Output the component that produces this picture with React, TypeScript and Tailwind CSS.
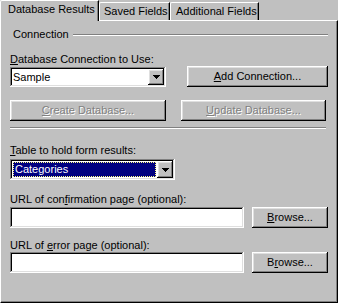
import type { ReactNode } from 'react'

const raised =
  'bg-[#c0c0c0] shadow-[inset_-1px_-1px_#000,inset_1px_1px_#fff,inset_-2px_-2px_#808080,inset_2px_2px_#dfdfdf]'
const sunken =
  'shadow-[inset_-1px_-1px_#fff,inset_1px_1px_#808080,inset_-2px_-2px_#dfdfdf,inset_2px_2px_#000]'

const Arrow = () => (
  <svg width="7" height="4" viewBox="0 0 7 4" shapeRendering="crispEdges">
    <rect x="0" y="0" width="7" height="1" fill="#000" />
    <rect x="1" y="1" width="5" height="1" fill="#000" />
    <rect x="2" y="2" width="3" height="1" fill="#000" />
    <rect x="3" y="3" width="1" height="1" fill="#000" />
  </svg>
)

type ComboProps = {
  value: string
  className: string
  selected?: boolean
}

const Combo = ({ value, className, selected }: ComboProps) => (
  <div className={`flex bg-white p-[2px] ${sunken} ${className}`}>
    {selected ? (
      <div className="m-[1px] flex flex-1 items-center border border-dotted border-[#ffff7f] bg-[#000080] pl-[1px] text-white">
        {value}
      </div>
    ) : (
      <div className="flex flex-1 items-center pl-[1px]">{value}</div>
    )}
    <div className={`flex w-[16px] items-center justify-center ${raised}`}>
      <Arrow />
    </div>
  </div>
)

type BtnProps = {
  children: ReactNode
  className: string
  disabled?: boolean
}

const Btn = ({ children, className, disabled }: BtnProps) => (
  <button
    type="button"
    className={`flex h-[21px] items-center justify-center ${raised} ${
      disabled ? 'text-[#808080] [text-shadow:1px_1px_0_#fff]' : 'text-black'
    } ${className}`}
  >
    {children}
  </button>
)

const Field = () => (
  <input
    type="text"
    className={`h-[21px] w-[234px] bg-white outline-none ${sunken}`}
  />
)

export default function App() {
  return (
    <div className="flex h-[303px] w-[338px] select-none flex-col bg-[#c0c0c0] font-['Liberation_Sans',Arial,sans-serif] text-[11px] leading-[13px] text-black">
      {/* tabs */}
      <div className="flex h-[20px] items-end">
        <div className="relative z-10 -mb-px h-[21px] w-[99px] rounded-tl-[2px] border-l border-r border-t border-white border-r-black bg-[#c0c0c0] pl-[7px] pt-[2px] shadow-[inset_-1px_0_#808080]">
          Database Results
        </div>
        <div className="h-[18px] w-[71px] rounded-tl-[2px] border-l border-r border-t border-white border-r-black pl-[4px] pt-[2px] shadow-[inset_-1px_0_#808080]">
          Saved Fields
        </div>
        <div className="h-[18px] w-[89px] rounded-tl-[2px] border-l border-r border-t border-white border-r-black pl-[5px] pt-[2px] shadow-[inset_-1px_0_#808080]">
          Additional Fields
        </div>
      </div>

      {/* panel */}
      <div className="flex flex-1 flex-col border border-white border-b-black border-r-black px-[9px] shadow-[inset_-1px_-1px_#808080]">
        <div className="mt-[7px] flex items-start">
          <span className="ml-[3px]">Connection</span>
          <div className="ml-[4px] mt-[6px] h-[2px] flex-1 border-b border-t border-b-white border-t-[#808080]" />
        </div>

        <div className="mt-[12px]">
          <u>D</u>atabase Connection to Use:
        </div>
        <div className="flex items-start">
          <Combo value="Sample" className="mt-[1px] h-[20px] w-[156px]" />
          <Btn className="ml-auto w-[141px]">
            <u>A</u>dd Connection...
          </Btn>
        </div>

        <div className="mt-[13px] flex items-start">
          <Btn disabled className="w-[156px]">
            <u>C</u>reate Database...
          </Btn>
          <Btn disabled className="ml-[15px] w-[145px]">
            <u>U</u>pdate Database...
          </Btn>
        </div>

        <div className="mt-[6px] h-[2px] w-[316px] border-b border-t border-b-white border-t-[#808080]" />

        <div className="mt-[15px]">
          <u>T</u>able to hold form results:
        </div>
        <Combo value="Categories" selected className="mt-[2px] h-[21px] w-[165px]" />

        <div className="mt-[13px]">
          URL of con<u>f</u>irmation page (optional):
        </div>
        <div className="mt-[1px] flex items-start">
          <Field />
          <Btn className="ml-auto w-[76px]">
            <u>B</u>rowse...
          </Btn>
        </div>

        <div className="mt-[11px]">
          URL of <u>e</u>rror page (optional):
        </div>
        <div className="flex items-start">
          <Field />
          <Btn className="ml-auto w-[76px]">
            B<u>r</u>owse...
          </Btn>
        </div>
      </div>
    </div>
  )
}
